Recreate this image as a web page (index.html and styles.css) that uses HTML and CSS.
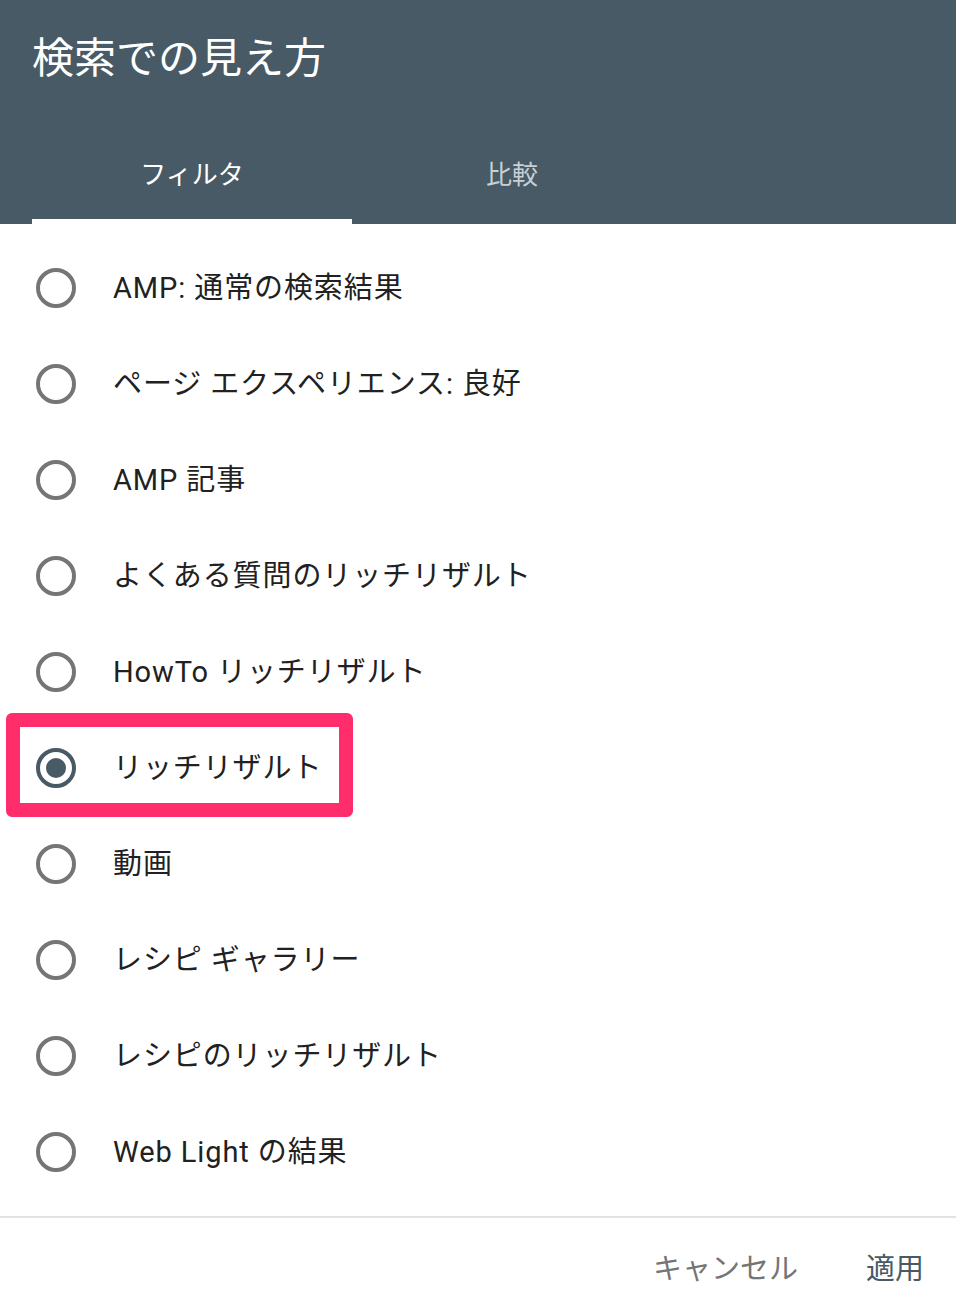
FILE: index.html
```html
<!DOCTYPE html>
<html lang="ja">
<head>
<meta charset="utf-8">
<link rel="stylesheet" href="styles.css">
</head>
<body>
<div class="dialog">
  <header class="head">
    <h1 class="title">検索での見え方</h1>
    <nav class="tabs">
      <div class="tab active">フィルタ</div>
      <div class="tab">比較</div>
    </nav>
  </header>
  <ul class="list">
    <li class="row"><span class="radio"></span><span class="label">AMP: 通常の検索結果</span></li>
    <li class="row"><span class="radio"></span><span class="label">ページ エクスペリエンス: 良好</span></li>
    <li class="row"><span class="radio"></span><span class="label">AMP 記事</span></li>
    <li class="row"><span class="radio"></span><span class="label">よくある質問のリッチリザルト</span></li>
    <li class="row"><span class="radio"></span><span class="label">HowTo リッチリザルト</span></li>
    <li class="row selected"><span class="radio checked"></span><span class="label">リッチリザルト</span><span class="highlight"></span></li>
    <li class="row"><span class="radio"></span><span class="label">動画</span></li>
    <li class="row"><span class="radio"></span><span class="label">レシピ ギャラリー</span></li>
    <li class="row"><span class="radio"></span><span class="label">レシピのリッチリザルト</span></li>
    <li class="row"><span class="radio"></span><span class="label">Web Light の結果</span></li>
  </ul>
  <footer class="actions">
    <button class="btn cancel">キャンセル</button>
    <button class="btn apply">適用</button>
  </footer>
</div>
</body>
</html>
```
FILE: styles.css
```css
* { box-sizing: border-box; }
html, body { margin: 0; padding: 0; background: #fff; }
body {
  font-family: Roboto, "Noto Sans CJK JP", sans-serif;
  width: 956px;
  height: 1310px;
  overflow: hidden;
}
.dialog { display: flex; flex-direction: column; }
.head {
  background: #475a66;
  height: 224px;
  display: flex;
  flex-direction: column;
}
.title {
  margin: 0;
  padding: 30px 0 0 32px;
  height: 126px;
  font-weight: 400;
  font-size: 42px;
  line-height: 58px;
  color: #fff;
}
.tabs {
  display: flex;
  padding-left: 32px;
  height: 98px;
}
.tab {
  width: 320px;
  text-align: center;
  font-size: 26px;
  line-height: 40px;
  padding-top: 29px;
  color: #c9d0d4;
  border-bottom: 5px solid transparent;
}
.tab.active { color: #fff; border-bottom-color: #fff; }
.list {
  list-style: none;
  margin: 0;
  padding: 16px 0;
  border-bottom: 2px solid #e2e2e2;
}
.row {
  position: relative;
  height: 96px;
  display: flex;
  align-items: center;
  padding-left: 36px;
}
.radio {
  width: 40px;
  height: 40px;
  border: 4px solid #757575;
  border-radius: 50%;
  flex: none;
  display: flex;
  align-items: center;
  justify-content: center;
}
.radio.checked { border-color: #475a66; }
.radio.checked::after {
  content: "";
  width: 20px;
  height: 20px;
  border-radius: 50%;
  background: #475a66;
}
.label {
  margin-left: 37px;
  font-size: 29px;
  letter-spacing: 0.9px;
  color: #212121;
  line-height: 40px;
}
.highlight {
  position: absolute;
  left: 6px;
  top: -7px;
  width: 347px;
  height: 104px;
  border: 14px solid #ff2d6c;
  border-radius: 6px;
  pointer-events: none;
}
.actions {
  display: flex;
  justify-content: flex-end;
  align-items: center;
  height: 94px;
  padding: 8px 32px 0 0;
  gap: 68px;
}
.btn {
  background: none;
  border: none;
  padding: 0;
  font-family: Roboto, "Noto Sans CJK JP", sans-serif;
  font-size: 29px;
  line-height: 40px;
}
.cancel { color: #757575; }
.apply { color: #475a66; }
```
